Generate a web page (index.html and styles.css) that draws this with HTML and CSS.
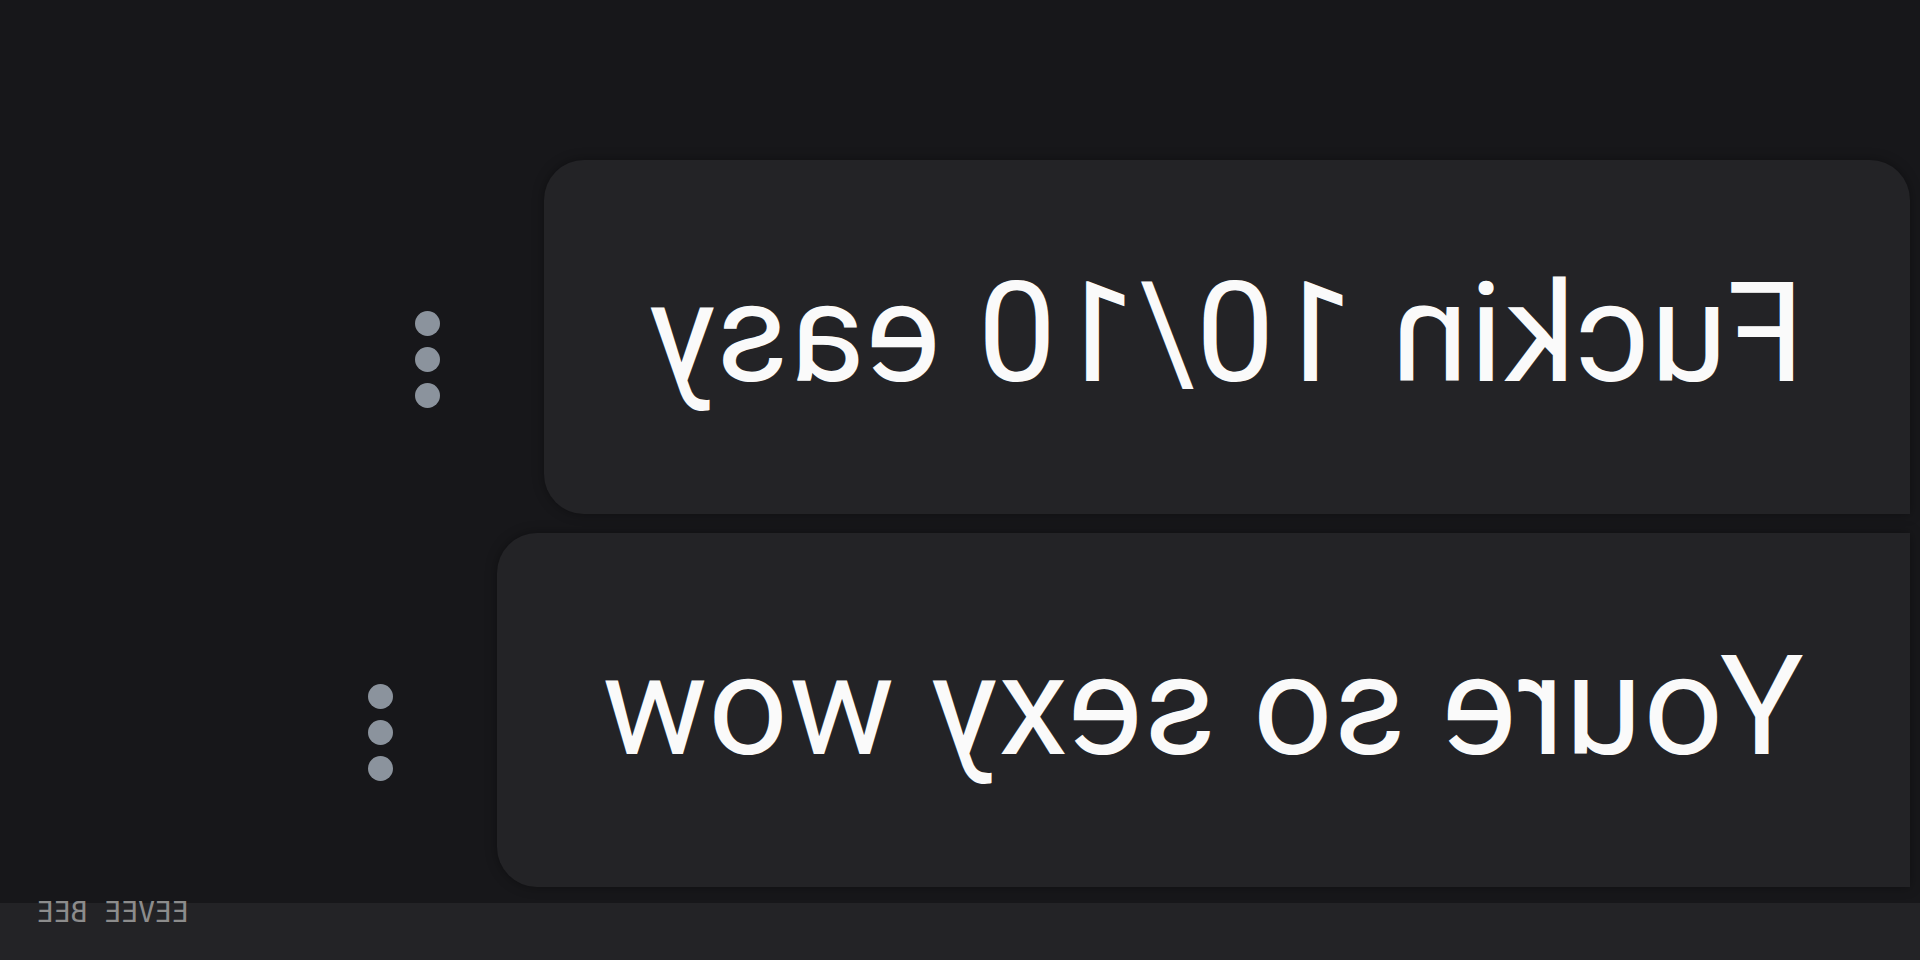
FILE: index.html
```html
<!DOCTYPE html>
<html lang="en">
<head>
  <meta charset="UTF-8" />
  <meta name="viewport" content="width=device-width, initial-scale=1.0" />
  <title>Chat</title>
  <link rel="stylesheet" href="styles.css">
</head>
<body>

  <!-- Message list (mirrored screenshot) -->
  <div class="chat">
    <div class="message-row">
      <div class="more-dots"><span></span><span></span><span></span></div>
      <div class="bubble bubble-first">
        <span class="bubble-text">Fuckin 10/10 easy</span>
      </div>
    </div>

    <div class="message-row">
      <div class="more-dots"><span></span><span></span><span></span></div>
      <div class="bubble bubble-next">
        <span class="bubble-text">Youre so sexy wow</span>
      </div>
    </div>
  </div>

  <!-- Input bar -->
  <div class="bottom-bar"></div>

  <span class="watermark">EEVEE BEE</span>

</body>
</html>
```

FILE: styles.css
```css
body {
  font-family: Roboto, 'Liberation Sans', sans-serif;
  background-color: #17171a;
  margin: 0;
  padding: 0;
  height: 960px;
  overflow: hidden;
  display: flex;
  flex-direction: column;
  position: relative;
}

.chat {
  flex: 1;
  display: flex;
  flex-direction: column;
  align-items: flex-end;
  gap: 19px;
  padding: 160px 10px 0 0;
}

.message-row {
  display: flex;
  align-items: center;
  gap: 104px;
}

/* three vertical dots next to each message */
.more-dots {
  display: flex;
  flex-direction: column;
  gap: 11px;
  margin-top: 44px;
}
.more-dots span {
  width: 25px;
  height: 25px;
  border-radius: 50%;
  background-color: #8b939d;
}

.bubble {
  background-color: #232326;
  padding: 91px 106px 99px 104px;
  box-shadow: 0 0 12px rgba(0, 0, 0, 0.35);
}
.bubble-first {
  border-radius: 40px 40px 0 40px;
}
.bubble-next {
  border-radius: 40px 0 0 40px;
}
.bubble-text {
  display: block;
  color: #fafafa;
  font-size: 140px;
  letter-spacing: 1px;
  white-space: nowrap;
  transform: scaleX(-1);
}

.bottom-bar {
  height: 57px;
  background-color: #232326;
}

.watermark {
  position: absolute;
  left: 37px;
  top: 896px;
  font-family: 'DejaVu Sans Mono', monospace;
  font-size: 28px;
  color: #8c8c8c;
  transform: scaleX(-1);
}
```
